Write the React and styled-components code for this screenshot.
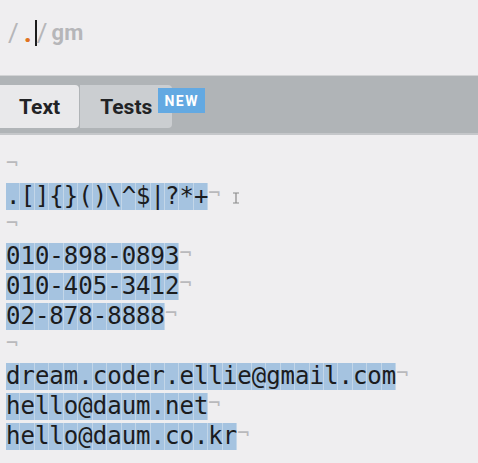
import React from 'react';
import styled, { createGlobalStyle } from 'styled-components';

const lines = [
  '',
  '.[]{}()\\^$|?*+',
  '',
  '010-898-0893',
  '010-405-3412',
  '02-878-8888',
  '',
  'dream.coder.ellie@gmail.com',
  'hello@daum.net',
  'hello@daum.co.kr',
];

const App = () => (
  <>
    <GlobalStyle />
    <Page>
      <Header>
        <Slash>/</Slash>
        <Dot>.</Dot>
        <Caret />
        <Slash>/</Slash>
        <Flags>gm</Flags>
      </Header>

      <TabBar>
        <Tab active>Text</Tab>
        <Tab>
          Tests
          <Badge>NEW</Badge>
        </Tab>
      </TabBar>

      <Editor>
        {lines.map((line, i) => (
          <Line key={i}>
            {line.split('').map((ch, j) => (
              <Char key={j}>{ch}</Char>
            ))}
            <Eol>¬</Eol>
            {i === 1 && (
              <IBeam width="8" height="12" viewBox="0 0 8 12">
                <path d="M1 1h6M4 1v10M1 11h6" stroke="#8a8a8a" strokeWidth="1.2" fill="none" />
              </IBeam>
            )}
          </Line>
        ))}
      </Editor>
    </Page>
  </>
);

export default App;

/*
 * STYLES
 */

const GlobalStyle = createGlobalStyle`
  html, body {
    margin: 0;
    padding: 0;
    background: #efeef0;
  }
`;

const Page = styled.div`
  width: 478px;
  height: 463px;
  overflow: hidden;
  background: #efeef0;
`;

const Header = styled.div`
  height: 76px;
  display: flex;
  align-items: center;
  padding: 0 0 10px 8px;
  box-sizing: border-box;
  font-family: Roboto, 'Liberation Sans', sans-serif;
  font-size: 26px;
  font-weight: 700;
  color: #b6b6b9;
  border-bottom: 1px solid #d2d3d5;
`;

const Slash = styled.span`
  font-weight: 400;
  margin-right: 5px;
`;

const Dot = styled.span`
  color: #e0731f;
  font-weight: 700;
  font-size: 28px;
  margin-right: 3px;
`;

const Caret = styled.span`
  display: inline-block;
  width: 2px;
  height: 26px;
  background: #1c1c1c;
`;

const Flags = styled.span`
  font-size: 22px;
  margin-left: -1px;
`;

const TabBar = styled.div`
  height: 59px;
  background: #b0b4b7;
  display: flex;
  align-items: flex-start;
  padding-top: 9px;
  box-sizing: border-box;
  border-bottom: 2px solid #c5c7ca;
`;

const Tab = styled.div`
  height: 43px;
  display: flex;
  align-items: center;
  padding: 0 ${(p) => (p.active ? '19px' : '20px')} 0 ${(p) => (p.active ? '19px' : '20px')};
  margin-right: 1px;
  background: ${(p) => (p.active ? '#e9e9eb' : '#cbced1')};
  border-radius: 0 4px 4px 0;
  font-family: Roboto, 'Liberation Sans', sans-serif;
  font-size: 21px;
  font-weight: 700;
  color: #222325;
  position: relative;
`;

const Badge = styled.span`
  position: absolute;
  left: 78px;
  top: 3px;
  width: 47px;
  height: 25px;
  display: flex;
  align-items: center;
  justify-content: center;
  background: #63a9e2;
  color: #fff;
  font-size: 14px;
  font-weight: 700;
  letter-spacing: 1.5px;
`;

const Editor = styled.div`
  padding: 16px 0 0 6px;
  font-family: 'DejaVu Sans Mono', 'Liberation Mono', monospace;
  font-size: 24px;
  color: #1b1c1e;
`;

const Line = styled.div`
  height: 30px;
  display: flex;
  align-items: center;
  white-space: pre;
`;

const Char = styled.span`
  display: inline-block;
  height: 27px;
  line-height: 27px;
  background: #a5c3e0;
  box-shadow: inset -1px 0 0 #c3d6e8;
`;

const Eol = styled.span`
  color: #b9b9bc;
  font-size: 20px;
  line-height: 20px;
  align-self: flex-start;
  margin-top: 2px;
`;

const IBeam = styled.svg`
  margin-left: 12px;
  margin-top: 4px;
`;
